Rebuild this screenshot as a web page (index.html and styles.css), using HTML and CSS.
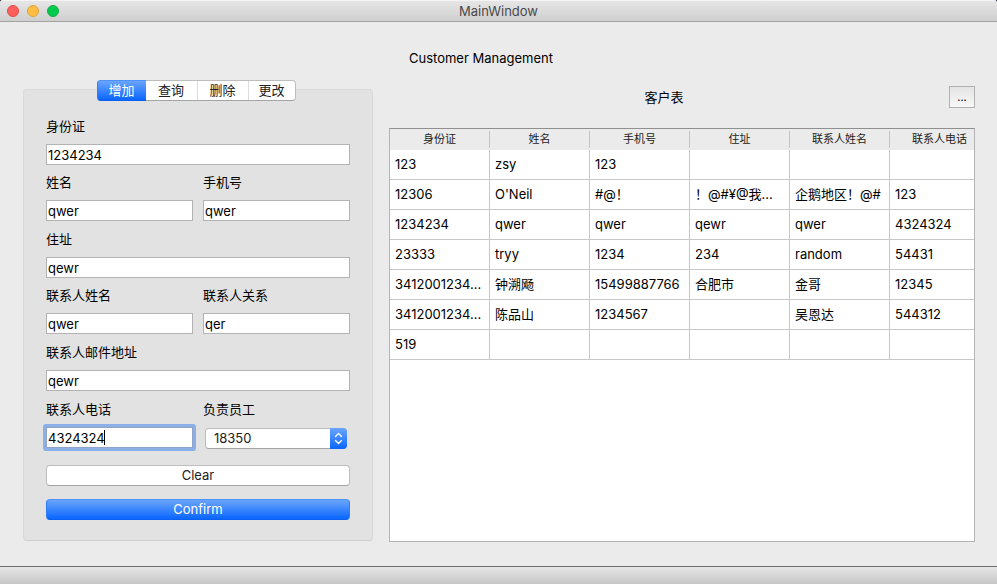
FILE: index.html
```html
<!DOCTYPE html>
<html lang="zh-CN">
<head>
<meta charset="utf-8">
<title>MainWindow</title>
<link rel="stylesheet" href="styles.css">
</head>
<body>
<div class="window">
  <header class="titlebar">
    <div class="lights">
      <button type="button" class="light close" aria-label="Close"></button>
      <button type="button" class="light minimize" aria-label="Minimize"></button>
      <button type="button" class="light maximize" aria-label="Maximize"></button>
    </div>
    <span class="window-title">MainWindow</span>
  </header>

  <main class="content">
    <h1 class="heading">Customer Management</h1>
    <div class="columns">
      <section class="editor">
        <div class="tabs" role="tablist">
          <button type="button" class="tab active" role="tab" aria-selected="true">增加</button>
          <button type="button" class="tab" role="tab">查询</button>
          <button type="button" class="tab" role="tab">删除</button>
          <button type="button" class="tab" role="tab">更改</button>
        </div>
        <form class="panel">
          <div class="row wide">
            <div class="field"><label for="idno">身份证</label><input id="idno" type="text" value="1234234"></div>
          </div>
          <div class="row pair">
            <div class="field"><label for="name">姓名</label><input id="name" type="text" value="qwer"></div>
            <div class="field"><label for="mobile">手机号</label><input id="mobile" type="text" value="qwer"></div>
          </div>
          <div class="row wide">
            <div class="field"><label for="address">住址</label><input id="address" type="text" value="qewr"></div>
          </div>
          <div class="row pair">
            <div class="field"><label for="cname">联系人姓名</label><input id="cname" type="text" value="qwer"></div>
            <div class="field"><label for="relation">联系人关系</label><input id="relation" type="text" value="qer"></div>
          </div>
          <div class="row wide">
            <div class="field"><label for="email">联系人邮件地址</label><input id="email" type="text" value="qewr"></div>
          </div>
          <div class="row pair last">
            <div class="field"><label for="phone">联系人电话</label><div class="focused"><input id="phone" type="text" value="4324324"><i class="cursor"></i></div></div>
            <div class="field"><label for="staff">负责员工</label>
              <div class="popup">
                <select id="staff"><option>18350</option></select>
                <svg class="popup-arrows" viewBox="0 0 17 21" aria-hidden="true"><path d="M5.5 8.5 8.5 5.5 11.5 8.5M5.5 12.5 8.5 15.5 11.5 12.5"/></svg>
              </div>
            </div>
          </div>
          <div class="actions">
            <button type="reset" class="push">Clear</button>
            <button type="submit" class="push primary">Confirm</button>
          </div>
        </form>
      </section>

      <section class="listing">
        <div class="toolbar">
          <h2 class="caption">客户表</h2>
          <button type="button" class="more">...</button>
        </div>
        <div class="table-view">
          <table>
            <thead>
              <tr><th><span>身份证</span></th><th><span>姓名</span></th><th><span>手机号</span></th><th><span>住址</span></th><th><span>联系人姓名</span></th><th><span>联系人电话</span></th></tr>
            </thead>
            <tbody>
              <tr><td>123</td><td>zsy</td><td>123</td><td></td><td></td><td></td></tr>
              <tr><td>12306</td><td>O'Neil</td><td>#@！</td><td>！@#¥@我...</td><td>企鹅地区！@#</td><td>123</td></tr>
              <tr><td>1234234</td><td>qwer</td><td>qwer</td><td>qewr</td><td>qwer</td><td>4324324</td></tr>
              <tr><td>23333</td><td>tryy</td><td>1234</td><td>234</td><td>random</td><td>54431</td></tr>
              <tr><td>3412001234...</td><td>钟溯飏</td><td>15499887766</td><td>合肥市</td><td>金哥</td><td>12345</td></tr>
              <tr><td>3412001234...</td><td>陈品山</td><td>1234567</td><td></td><td>吴恩达</td><td>544312</td></tr>
              <tr><td>519</td><td></td><td></td><td></td><td></td><td></td></tr>
            </tbody>
          </table>
        </div>
      </section>
    </div>
  </main>

  <footer class="statusbar"></footer>
</div>
</body>
</html>
```
FILE: styles.css
```css
* { box-sizing: border-box; }

html { background: #20242c; }

body {
  margin: 0;
  font: 13px/20px Inter, "Noto Sans CJK SC", sans-serif;
  color: #000;
}

button, input, select { font: inherit; color: inherit; margin: 0; }

.window {
  display: flex;
  flex-direction: column;
  min-height: 100vh;
  background: #ebebeb;
  border-radius: 3px 3px 0 0;
  overflow: hidden;
}

/* Title bar */
.titlebar {
  display: grid;
  grid-template-columns: 1fr auto 1fr;
  align-items: center;
  height: 22px;
  padding: 0 7px;
  background: linear-gradient(#e6e6e6, #cfcfcf);
  border-top: 1px solid #f4f4f4;
  border-bottom: 1px solid #a3a3a3;
}
.lights { display: flex; gap: 8px; }
.light { width: 12px; height: 12px; padding: 0; border-radius: 50%; border: 1px solid; }
.close { background: #ff605c; border-color: #e24b46; }
.minimize { background: #ffbd44; border-color: #e0a23a; }
.maximize { background: #00ca4e; border-color: #12ac43; }
.window-title { color: #4a4a4a; }

/* Content */
.content {
  flex: 1;
  display: flex;
  flex-direction: column;
  gap: 12px;
  padding: 26px 22px 24px 23px;
}
.heading, .caption { margin: 0; font-size: 13px; font-weight: 400; text-align: center; }
.heading { padding-right: 36px; }
.columns {
  flex: 1;
  display: grid;
  grid-template-columns: 350px minmax(0, 1fr);
  gap: 16px;
}

/* Editor */
.editor { display: flex; flex-direction: column; padding-bottom: 1px; }
.tabs {
  display: flex;
  align-self: center;
  position: relative;
  height: 21px;
  margin: 0 4px -12px 0;
  border: 1px solid #bdbdbd;
  border-bottom-color: #a4a4a4;
  border-radius: 4px;
  background: #fff;
}
.tab {
  width: 51px;
  padding: 0;
  border: 0;
  border-left: 1px solid #dcdcdc;
  background: none;
  color: #222;
  line-height: 19px;
}
.tab:last-child { width: 47px; }
.tab.active {
  width: 49px;
  margin: -1px 0 -1px -1px;
  border: 1px solid #2f7cf6;
  border-top-color: #4b93f8;
  border-bottom-color: #0a60f0;
  border-right: 0;
  border-radius: 4px 0 0 4px;
  background: linear-gradient(#6ba5fc, #0a66ff);
  color: #fff;
}
.tab.active + .tab { border-left: 0; }

.panel {
  flex: 1;
  padding: 26px 22px 20px;
  background: #e2e2e2;
  border: 1px solid #d9d9d9;
  border-bottom-color: #cecece;
  border-radius: 4px;
}
.row { display: flex; gap: 10px; }
.row + .pair { margin-top: 7px; }
.row + .wide, .row + .last { margin-top: 8px; }
.field { flex: 1; min-width: 0; display: flex; flex-direction: column; gap: 8px; }
.field input {
  width: 100%;
  height: 21px;
  padding: 0 1px;
  border: 1px solid #b3b3b3;
  border-radius: 0;
  background: #fff;
  outline: 0;
}
.focused { position: relative; height: 21px; border-radius: 1px; box-shadow: 0 0 0 3px #8bb0e8; }
.field .focused input { display: block; border-color: #8fa4c6; }
.cursor { position: absolute; left: 58px; top: 3px; width: 1px; height: 15px; background: #000; }

.popup { position: relative; height: 21px; margin: 1px 3px 0 2px; }
.popup select {
  appearance: none;
  display: block;
  width: 100%;
  height: 21px;
  padding: 0 20px 1px 8px;
  border: 1px solid #bdbdbd;
  border-bottom-color: #a4a4a4;
  border-radius: 4px;
  background: #fff;
  color: #222;
  line-height: 18px;
}
.popup-arrows {
  position: absolute;
  top: 0;
  right: 0;
  width: 17px;
  height: 21px;
  border-radius: 0 4px 4px 0;
  background: linear-gradient(#6ba5fc, #0a66ff);
  fill: none;
  stroke: #fff;
  stroke-width: 1.4;
  stroke-linecap: round;
  stroke-linejoin: round;
  pointer-events: none;
}

.actions { display: flex; flex-direction: column; gap: 13px; margin-top: 16px; }
.push {
  height: 21px;
  padding: 0;
  border: 1px solid #bdbdbd;
  border-bottom-color: #a4a4a4;
  border-radius: 4px;
  background: #fff;
  color: #222;
  line-height: 19px;
}
.push.primary {
  border-color: #4b93f8 #2f7cf6 #0a60f0;
  background: linear-gradient(#6ba5fc, #0a66ff);
  color: #fff;
}

/* Customer table */
.listing { display: flex; flex-direction: column; gap: 20px; padding-top: 6px; }
.toolbar { display: flex; align-items: center; gap: 10px; }
.caption { flex: 1; }
.more {
  width: 26px;
  height: 22px;
  padding: 0;
  border: 1px solid #b0b0b0;
  background: linear-gradient(#e4e4e4, #f8f8f8);
  font-size: 11px;
  line-height: 20px;
}
.table-view {
  flex: 1;
  overflow: hidden;
  background: #fff;
  border: 1px solid #b4b4b4;
  border-top-color: #8f8f8f;
}
table { width: 600px; table-layout: fixed; border-collapse: separate; border-spacing: 0; }
th {
  height: 21px;
  padding: 2px 0;
  background: #ebebeb;
  font-size: 11px;
  font-weight: 400;
  line-height: 17px;
  color: #222;
}
th span { display: block; border-right: 1px solid #c3c3c3; }
td {
  height: 30px;
  padding: 0 5px 2px;
  border: solid #c8c8c8;
  border-width: 0 1px 1px 0;
  line-height: 20px;
  white-space: nowrap;
  overflow: hidden;
}

.statusbar {
  height: 18px;
  border-top: 1px solid #6e6e6e;
  background: linear-gradient(#e6e6e6, #c6c6c6);
}
```
